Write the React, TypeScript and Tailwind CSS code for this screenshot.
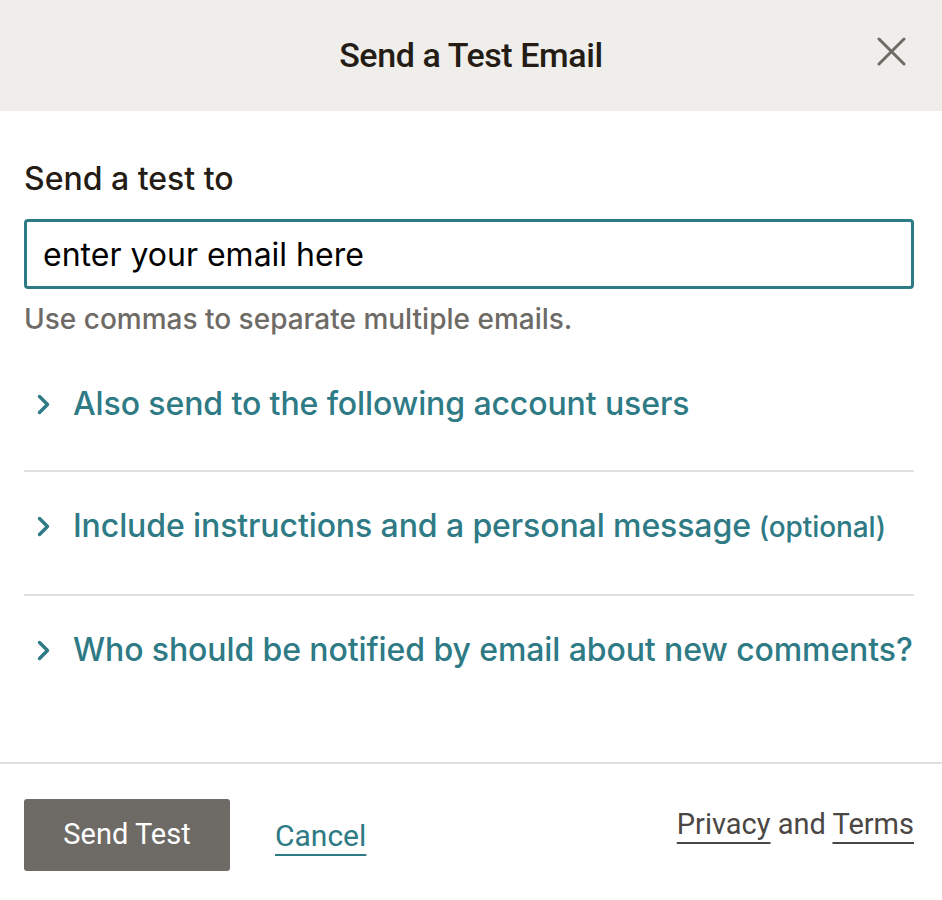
const rows = [
  { label: 'Also send to the following account users', extra: '' },
  { label: 'Include instructions and a personal message', extra: '(optional)' },
  { label: 'Who should be notified by email about new comments?', extra: '' },
]

function Chevron() {
  return (
    <svg width="14" height="21" viewBox="0 0 14 21" fill="none" className="ml-[13px] mr-[22px] shrink-0">
      <path d="M2.5 2.5 L10.5 10.5 L2.5 18.5" stroke="#2e7a85" strokeWidth="3.4" strokeLinecap="round" strokeLinejoin="round" />
    </svg>
  )
}

export default function App() {
  return (
    <div className="w-[942px] h-[900px] bg-white text-[#241c15] font-['Inter','Liberation_Sans',sans-serif]">
      {/* header */}
      <div className="relative h-[111px] bg-[#efeeea] flex items-center justify-center">
        <h1 className="text-[34px] font-medium tracking-[-0.4px] font-['Roboto','Liberation_Sans',sans-serif]">Send a Test Email</h1>
        <button className="absolute right-[36px] top-[37px]">
          <svg width="29" height="29" viewBox="0 0 29 29" fill="none">
            <path d="M2 2 L27 27 M27 2 L2 27" stroke="#6e6a66" strokeWidth="3" strokeLinecap="round" />
          </svg>
        </button>
      </div>

      {/* body */}
      <div className="pl-[24px] pr-[28px] pt-[50px] pb-[44px]">
        <label className="block text-[32px] font-medium leading-[36px]">Send a test to</label>
        <input
          className="mt-[22px] w-full h-[70px] border-[3px] border-[#2e7a85] rounded-[4px] px-[16px] text-[32px] text-black outline-none placeholder:text-black"
          placeholder="enter your email here"
        />
        <p className="mt-[12px] text-[28px] font-medium leading-[36px] text-[#6e6a66]">Use commas to separate multiple emails.</p>

        <div className="mt-[9px]">
          {rows.map((r, i) => (
            <div
              key={i}
              className={`flex items-center h-[124px] ${i > 0 ? 'border-t-2 border-[#e0e0e0] pt-[36px] pb-[50px]' : 'pt-[40px] pb-[48px]'}`}
            >
              <Chevron />
              <span className="text-[32px] leading-[36px] font-medium text-[#2e7a85] tracking-[-0.1px] whitespace-nowrap">
                {r.label}
                {r.extra && <span className="text-[28px] ml-[8px]">{r.extra}</span>}
              </span>
            </div>
          ))}
        </div>
      </div>

      {/* footer */}
      <div className="border-t-2 border-[#e0e0e0] pl-[24px] pr-[28px] pt-[35px] flex items-start justify-between font-['Roboto','Liberation_Sans',sans-serif]">
        <div className="flex items-center gap-[45px]">
          <button className="w-[206px] h-[72px] bg-[#6e6a66] text-white text-[29px] rounded-[3px]">Send Test</button>
          <a href="#" className="text-[30px] text-[#2e7a85] underline underline-offset-[8px] decoration-2">Cancel</a>
        </div>
        <div className="text-[29px] text-[#4b4744] pt-[4px]">
          <a href="#" className="underline underline-offset-[8px] decoration-2">Privacy</a> and{' '}
          <a href="#" className="underline underline-offset-[8px] decoration-2">Terms</a>
        </div>
      </div>
    </div>
  )
}
